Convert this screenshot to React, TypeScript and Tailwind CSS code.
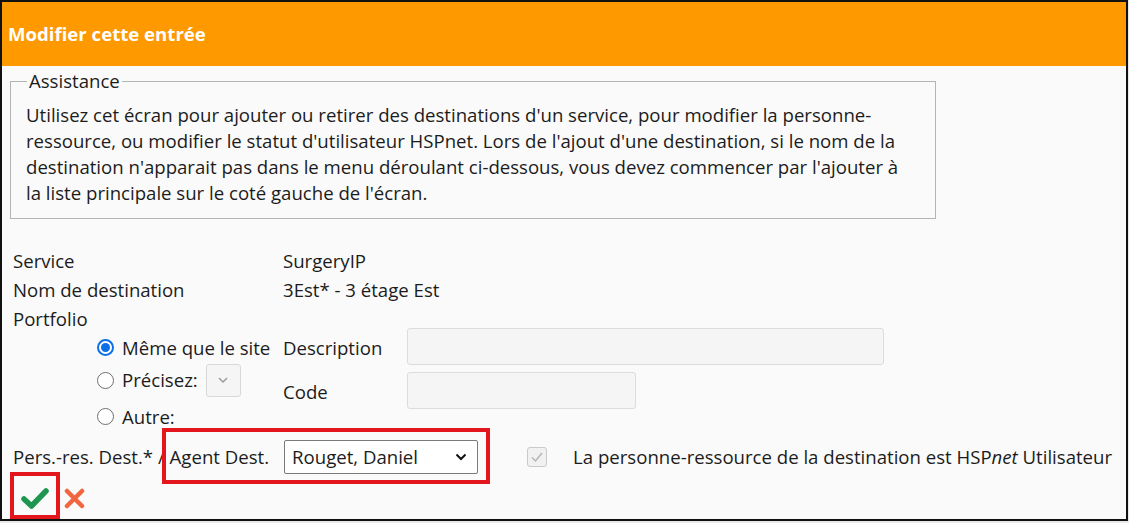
export default function App() {
  const Radio = ({ checked }: { checked?: boolean }) =>
    checked ? (
      <span className="w-[17px] h-[17px] rounded-full border-[2px] border-[#0b6fe8] flex items-center justify-center bg-white shrink-0">
        <span className="w-[9px] h-[9px] rounded-full bg-[#0b6fe8]" />
      </span>
    ) : (
      <span className="w-[17px] h-[17px] rounded-full border border-[#6f6f6f] bg-white shrink-0" />
    );

  return (
    <div className="w-[1129px] h-[523px] bg-[#e9e9e9] font-['Open_Sans',sans-serif]">
      <div className="w-[1128px] h-[521px] border-2 border-[#111] bg-[#fafafa] overflow-hidden text-[#1c1c1c]">
        <div className="h-[64px] bg-[#ff9900] flex items-center pl-[6px]">
          <h1 className="text-white font-bold text-[18.6px] leading-none">Modifier cette entrée</h1>
        </div>

        <fieldset className="ml-[8px] mt-[3px] w-[926px] border border-[#b4b4b4] px-[15px] pb-[12px]">
          <legend className="ml-[1px] px-[2px] text-[18.6px] leading-[24px]">Assistance</legend>
          <p className="mt-[9px] pr-[8px] text-[18.6px] leading-[26px]">
            Utilisez cet écran pour ajouter ou retirer des destinations d'un service, pour modifier la personne-ressource, ou modifier le statut d'utilisateur HSPnet. Lors de l'ajout d'une destination, si le nom de la destination n'apparait pas dans le menu déroulant ci-dessous, vous devez commencer par l'ajouter à la liste principale sur le coté gauche de l'écran.
          </p>
        </fieldset>

        <div className="pl-[11px] mt-[27px] text-[18.6px]">
          <div className="flex h-[29px] items-center">
            <span className="w-[270px]">Service</span>
            <span>SurgeryIP</span>
          </div>
          <div className="flex h-[29px] items-center">
            <span className="w-[270px]">Nom de destination</span>
            <span>3Est* - 3 étage Est</span>
          </div>
          <div className="flex h-[29px] items-center">
            <span>Portfolio</span>
          </div>

          <div className="flex -mt-[5px]">
            <div className="w-[270px] pl-[84px] pt-[5px] flex flex-col">
              <div className="h-[29px] flex items-center">
                <Radio checked />
                <span className="ml-[8px] whitespace-nowrap">Même que le site</span>
              </div>
              <div className="h-[36px] flex items-center">
                <Radio />
                <span className="ml-[8px]">Précisez:</span>
                <span className="ml-[8px] w-[35px] h-[33px] border border-[#d8d8d8] rounded-[3px] bg-[#f5f5f5] flex items-center justify-center shrink-0">
                  <svg width="12" height="8" viewBox="0 0 12 8">
                    <path d="M2 2 L6 6 L10 2" fill="none" stroke="#9a9a9a" strokeWidth="1.5" />
                  </svg>
                </span>
              </div>
              <div className="h-[29px] mt-[4px] flex items-center">
                <Radio />
                <span className="ml-[8px]">Autre:</span>
              </div>
            </div>
            <div className="flex flex-col">
              <div className="flex items-center h-[37px]">
                <span className="w-[124px] pt-[2px]">Description</span>
                <span className="w-[477px] h-[37px] border border-[#dcdcdc] rounded-[3px] bg-[#f5f5f5]" />
              </div>
              <div className="flex items-center h-[37px] mt-[7px]">
                <span className="w-[124px] pt-[2px]">Code</span>
                <span className="w-[229px] h-[37px] border border-[#dcdcdc] rounded-[3px] bg-[#f5f5f5]" />
              </div>
            </div>
          </div>

          <div className="flex items-center h-[34px] mt-[9px]">
            <span className="whitespace-pre">Pers.-res. Dest.* / </span>
            <div className="relative flex items-center">
              <span>Agent Dest.</span>
              <div className="ml-[15px] w-[194px] h-[34px] border border-[#7a7a7a] rounded-[2px] bg-white flex items-center justify-between pl-[7px] pr-[10px]">
                <span>Rouget, Daniel</span>
                <svg width="12" height="8" viewBox="0 0 12 8">
                  <path d="M1.5 1.5 L6 6 L10.5 1.5" fill="none" stroke="#111" strokeWidth="2" />
                </svg>
              </div>
              <span className="absolute -left-[8px] -right-[12px] -top-[12px] -bottom-[10px] border-[4px] border-[#e3161e] pointer-events-none" />
            </div>
            <span className="ml-[49px] w-[20px] h-[20px] border border-[#cacaca] rounded-[3px] bg-[#f1f1f1] flex items-center justify-center">
              <svg width="14" height="12" viewBox="0 0 14 12">
                <path d="M2 6.5 L5.5 10 L12 2" fill="none" stroke="#b5b5b5" strokeWidth="1.5" />
              </svg>
            </span>
            <span className="ml-[26px] whitespace-nowrap">
              La personne-ressource de la destination est HSP<i>net</i> Utilisateur
            </span>
          </div>
        </div>

        <div className="flex items-center ml-[8px] -mt-[2px]">
          <div className="w-[50px] h-[47px] border-[4px] border-[#e3161e] flex items-center justify-center pt-[5px]">
            <svg width="28" height="21" viewBox="0 0 28 21">
              <path d="M3 11 L10.5 18 L25 3" fill="none" stroke="#1f9650" strokeWidth="5.5" strokeLinecap="round" strokeLinejoin="round" />
            </svg>
          </div>
          <svg className="ml-[4px] mt-[6px]" width="21" height="21" viewBox="0 0 21 21">
            <path d="M3 3 L18 18 M18 3 L3 18" fill="none" stroke="#f2653f" strokeWidth="4.5" strokeLinecap="round" />
          </svg>
        </div>
      </div>
    </div>
  );
}
